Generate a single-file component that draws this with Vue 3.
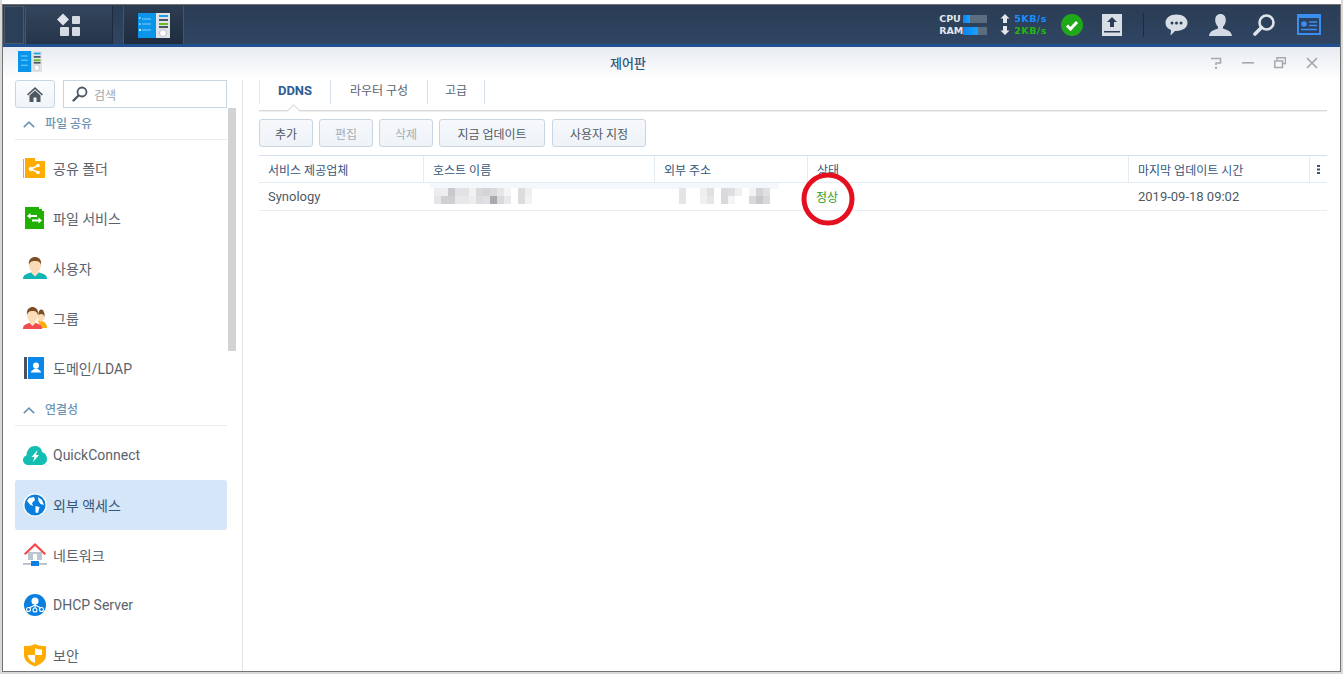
<template>
  <div class="page">
    <div class="top-strip"></div>
    <div class="window">
      <div class="taskbar">
        <div class="show-desktop"></div>
        <div class="menu-btn">
          <svg width="24" height="24" viewBox="0 0 24 24">
            <path d="M6 0.5 12 6.5 6 12.5 0 6.5Z" fill="#dfe4ea" />
            <rect x="15" y="3" width="8" height="8" rx="1" fill="#d5dbe3" />
            <rect x="3" y="14" width="9" height="9" rx="1" fill="#d5dbe3" />
            <rect x="15" y="14" width="8" height="9" rx="1" fill="#d5dbe3" />
          </svg>
        </div>
        <div class="app-btn">
          <svg width="32" height="25" viewBox="0 0 32 25">
            <rect width="18" height="25" fill="#0a94ea" />
            <rect x="18" width="14" height="25" fill="#dfe3e6" />
            <path d="M4 6h9M4 11h9M4 17h9" stroke="#7fd0ff" stroke-width="1.2" />
            <path d="M1 5h1.5M1 11h1.5" stroke="#c5ecff" stroke-width="1.4" />
            <rect x="1" y="16" width="2" height="2" fill="#c5ecff" />
            <rect x="21" y="2" width="9" height="2" fill="#1aa0e8" />
            <rect x="21" y="6" width="9" height="2" fill="#4a5560" />
            <rect x="21" y="10" width="9" height="2" fill="#66bb22" />
            <rect x="21" y="13" width="9" height="2" fill="#4a5560" />
            <circle cx="25" cy="20" r="3.5" fill="#fff" stroke="#b8c0c8" />
          </svg>
        </div>
        <div class="tray">
          <div class="meters">
            <div class="meter"><span class="meter-label">CPU</span><span class="bar"><i class="fill" :style="{ width: cpu + '%' }"></i></span></div>
            <div class="meter"><span class="meter-label">RAM</span><span class="bar"><i class="fill" :style="{ width: ram + '%' }"></i></span></div>
          </div>
          <div class="rates">
            <div class="rate up"><svg width="10" height="9" viewBox="0 0 10 9"><path d="M5 0 9.5 4.5H7V9H3V4.5H.5Z" fill="#e3e7ec" /></svg>5KB/s</div>
            <div class="rate down"><svg width="10" height="9" viewBox="0 0 10 9"><path d="M5 9 .5 4.5H3V0H7V4.5H9.5Z" fill="#e3e7ec" /></svg>2KB/s</div>
          </div>
          <svg class="check" width="24" height="24" viewBox="0 0 24 24">
            <circle cx="12" cy="12" r="11" fill="#1fa81a" />
            <path d="M7 12.5 10.5 16 17 9" fill="none" stroke="#fff" stroke-width="3" />
          </svg>
          <svg class="upload" width="20" height="22" viewBox="0 0 20 22">
            <rect width="20" height="22" fill="#d8dee5" />
            <path d="M10 3 15 8H12V13H8V8H5Z" fill="#2c3e56" />
            <rect x="2" y="17" width="16" height="1.5" fill="#2c3e56" />
          </svg>
          <span class="tray-sep"></span>
          <svg class="chat" width="23" height="22" viewBox="0 0 23 22">
            <path d="M11.5 0.5C17.8 0.5 22.5 4 22.5 8.8S17.8 17 11.5 17H10L5.5 21.5 6 16C2.500 14.800 .5 12.200 .5 8.800 .5 4 5.200 .5 11.500 .5Z" fill="#d8dee6" />
            <circle cx="7" cy="9" r="1.500" fill="#2c3e56" /><circle cx="11.500" cy="9" r="1.500" fill="#2c3e56" /><circle cx="16" cy="9" r="1.500" fill="#2c3e56" />
          </svg>
          <svg class="person" width="23" height="22" viewBox="0 0 23 22">
            <path d="M11.500 0C15 0 16.800 2.600 16.800 6 16.800 9 15.500 11.500 14 12.800V14.500C17 15.800 22.500 16.500 23 22H0C.5 16.500 6 15.800 9 14.500V12.800C7.500 11.500 6.200 9 6.200 6 6.200 2.600 8 0 11.500 0Z" fill="#d3dae3" />
          </svg>
          <svg class="find" width="23" height="22" viewBox="0 0 23 22">
            <circle cx="13.500" cy="8.500" r="7" fill="none" stroke="#dfe4ea" stroke-width="2.600" />
            <path d="M8.500 13.500 2 20" stroke="#dfe4ea" stroke-width="3.600" stroke-linecap="round" />
          </svg>
          <svg class="widget" width="24" height="21" viewBox="0 0 24 21">
            <rect width="24" height="21" fill="#3a8eef" />
            <rect x="2" y="4" width="20" height="15" fill="#2c4060" />
            <circle cx="7" cy="10" r="2.800" fill="#3a8eef" />
            <path d="M12 8h8M12 11.500h8M4 15.500h16" stroke="#3a8eef" stroke-width="1.600" />
          </svg>
        </div>
      </div>

      <div class="win-head">
        <svg class="win-icon" width="24" height="21" viewBox="0 0 32 25" preserveAspectRatio="none">
          <rect width="18" height="25" fill="#0a94ea" />
          <rect x="18" width="14" height="25" fill="#dfe3e6" />
          <path d="M4 6h9M4 11h9M4 17h9" stroke="#7fd0ff" stroke-width="1.200" />
          <rect x="21" y="2" width="9" height="2" fill="#1aa0e8" />
          <rect x="21" y="6" width="9" height="2" fill="#4a5560" />
          <rect x="21" y="10" width="9" height="2" fill="#66bb22" />
          <rect x="21" y="13" width="9" height="2" fill="#4a5560" />
          <circle cx="25" cy="20" r="3.500" fill="#fff" stroke="#b8c0c8" />
        </svg>
        <div class="win-title">제어판</div>
        <div class="win-controls">
          <svg width="12" height="12" viewBox="0 0 12 12"><path d="M1 1.500H10.500V6H6V8" fill="none" stroke="#a3a9af" stroke-width="1.600" /><rect x="5" y="9.800" width="2" height="2" fill="#a3a9af" /></svg>
          <svg width="12" height="12" viewBox="0 0 12 12"><rect y="5" width="12" height="1.600" fill="#a3a9af" /></svg>
          <svg width="12" height="12" viewBox="0 0 12 12"><path d="M3 3V.8H11.500V6.500H9M.8 4H8.500V10.500H.8Z" fill="none" stroke="#a3a9af" stroke-width="1.500" /></svg>
          <svg width="12" height="12" viewBox="0 0 12 12"><path d="M1 1 11 11M11 1 1 11" stroke="#a3a9af" stroke-width="1.700" /></svg>
        </div>
      </div>

      <div class="content">
        <aside class="sidebar">
          <div class="search-row">
            <button class="home-btn">
              <svg width="16" height="15" viewBox="0 0 16 15"><path d="M8 0 16 7.500 14.800 8.500 8 2.300 1.200 8.500 0 7.500Z" fill="#4d5863" /><path d="M2.500 8.500 8 3.500 13.500 8.500V15H9.500V10.500H6.500V15H2.500Z" fill="#4d5863" /></svg>
            </button>
            <div class="search">
              <svg width="16" height="16" viewBox="0 0 16 16"><circle cx="10" cy="6" r="4.500" fill="none" stroke="#4d5863" stroke-width="1.800" /><path d="M6.500 9.500 1.500 14.500" stroke="#4d5863" stroke-width="2.400" stroke-linecap="round" /></svg>
              <span>검색</span>
            </div>
          </div>

          <template v-for="group in groups" :key="group.title">
            <div class="group-head">
              <svg width="12" height="7" viewBox="0 0 12 7"><path d="M.8 6.200 6 1.200 11.200 6.200" fill="none" stroke="#6d93b4" stroke-width="1.600" /></svg>
              <span>{{ group.title }}</span>
            </div>
            <div class="group-items">
              <div v-for="item in group.items" :key="item.label" class="nav-item" :class="{ active: item.active }">
                <svg class="nav-icon" width="24" height="24" viewBox="0 0 24 24">
                  <template v-if="item.icon === 'folder'">
                    <rect x="0" y="3" width="1" height="19" fill="#ffab00" />
                    <path d="M2 2H12V5H22V22H2Z" fill="#ffab00" />
                    <path d="M8 13 15 9.500M8 13 15 16.500" stroke="#fff" stroke-width="1.500" />
                    <circle cx="8" cy="13" r="2.300" fill="#fff" /><circle cx="15" cy="9.500" r="1.800" fill="#fff" /><circle cx="15" cy="16.500" r="1.800" fill="#fff" />
                  </template>
                  <template v-else-if="item.icon === 'file'">
                    <path d="M2 1H16V3H19V5H21V23H2Z" fill="#20b000" />
                    <path d="M4 10 7.500 7V9H14V11H7.500V13ZM19 14.500 15.500 11.500V13.500H9V15.500H15.500V17.500Z" fill="#fff" />
                  </template>
                  <template v-else-if="item.icon === 'user'">
                    <path d="M0 23C0 19 3 18 8 16.500H16C21 18 24 19 24 23Z" fill="#0fb5b5" />
                    <path d="M8.500 13H15.500V17L12 20.500 8.500 17Z" fill="#fde0bc" />
                    <ellipse cx="12" cy="9" rx="6" ry="8" fill="#fbdcb8" />
                    <path d="M6 9C5 3 9 1 12 1S19 3 18 9C17 6 16 5 12 5S7 6 6 9Z" fill="#7c4e28" />
                  </template>
                  <template v-else-if="item.icon === 'group'">
                    <path d="M15 15 17 13 19 15C22 16 24 18 24 22H18Z" fill="#ffac10" />
                    <ellipse cx="18" cy="10" rx="3.500" ry="5.500" fill="#fbdcb8" />
                    <path d="M15.500 9C15 5 17 3.500 18.500 3.500S22 6 21.500 11C20.500 8 19 7 15.500 9Z" fill="#7c4e28" />
                    <path d="M0 23C0 19 2.500 18.500 6 17H13C16.500 18.500 19 19 19 23Z" fill="#f24b50" />
                    <path d="M6.500 13H12.500V17L9.500 20 6.500 17Z" fill="#fde0bc" />
                    <ellipse cx="9.500" cy="9" rx="5.500" ry="7.500" fill="#fbdcb8" />
                    <path d="M4 9C3 3 7 1 9.500 1S16 3 15 9C14 6 13 5 9.500 5S5 6 4 9Z" fill="#7c4e28" />
                  </template>
                  <template v-else-if="item.icon === 'domain'">
                    <rect x="1" y="1" width="3" height="22" fill="#47525e" />
                    <rect x="5" y="1" width="16" height="22" fill="#0a88ea" />
                    <circle cx="13" cy="9.500" r="3" fill="#fff" />
                    <path d="M8 16.500C8 14 11 14 11.500 12.500H14.500C15 14 18 14 18 16.500Z" fill="#fff" />
                  </template>
                  <template v-else-if="item.icon === 'cloud'">
                    <path d="M6 22C2.500 22 0 20 0 17 0 14.500 1.500 13 3.500 12.500 3.500 8 6.500 3 12 3 16 3 18.500 5.500 19 9 22 10 24 12.500 24 16 24 19.500 21.500 22 18 22Z" fill="#14bdb2" />
                    <path d="M14.500 7 8.500 14H11.500L10 19 16 12H13Z" fill="#fff" />
                  </template>
                  <template v-else-if="item.icon === 'globe'">
                    <circle cx="12" cy="12" r="11.800" fill="#fff" />
                    <circle cx="12" cy="12" r="10.500" fill="#0a7fe0" />
                    <path d="M6 5 11 4 12 7 9 10 10 13 7.500 12 4 8ZM12.500 13 16.500 14 15 20 12.500 19.500ZM15 4 19 7 21 12 17.500 11 15.500 8Z" fill="#fff" />
                  </template>
                  <template v-else-if="item.icon === 'network'">
                    <path d="M5 9H19V17H5Z" fill="#bcc6d0" />
                    <path d="M12 0 23 10.500 21.500 12 12 3 2.500 12 1 10.500Z" fill="#f5474c" />
                    <rect x="10" y="11" width="4" height="6" fill="#fff" />
                    <rect y="20" width="24" height="1.800" fill="#b4bdc7" />
                    <rect x="8" y="18" width="8" height="5" fill="#0a7fe0" />
                  </template>
                  <template v-else-if="item.icon === 'dhcp'">
                    <circle cx="12" cy="12" r="11" fill="#0a7fe0" />
                    <circle cx="12" cy="8" r="3.500" fill="#fff" />
                    <path d="M12 10V15M12 12 6 15M12 12 18 15" stroke="#fff" stroke-width="1.100" />
                    <circle cx="5.500" cy="16.500" r="2" fill="none" stroke="#fff" stroke-width="1.100" />
                    <circle cx="12" cy="17" r="2" fill="none" stroke="#fff" stroke-width="1.100" />
                    <circle cx="18.500" cy="16.500" r="2" fill="none" stroke="#fff" stroke-width="1.100" />
                  </template>
                  <template v-else-if="item.icon === 'shield'">
                    <path d="M12 1C16 3 19 3 23 3V12C23 18 18 21 12 23.500 6 21 1 18 1 12V3C5 3 8 3 12 1Z" fill="#ffab00" />
                    <path d="M12 5C14.500 6 16.500 6.500 19 6.500V12H12ZM12 12V20C8.500 18.500 5 16.500 5 12Z" fill="#fff" />
                  </template>
                </svg>
                <span>{{ item.label }}</span>
              </div>
            </div>
          </template>
          <div class="scroll-thumb"></div>
        </aside>

        <main class="main">
          <div class="tabs">
            <div v-for="tab in tabs" :key="tab.label" class="tab" :class="{ current: tab.current }" :style="{ width: tab.width + 'px' }">{{ tab.label }}</div>
          </div>
          <div class="toolbar">
            <button v-for="b in buttons" :key="b.label" class="tool-btn" :class="{ off: b.off }" :style="{ width: b.width + 'px' }">{{ b.label }}</button>
          </div>
          <div class="grid head">
            <div v-for="c in columns" :key="c" class="cell">{{ c }}</div>
            <div class="cell more">
              <svg width="3" height="9" viewBox="0 0 3 9"><path d="M0 0h3v2H0zM0 3.500h3v2H0zM0 7h3v2H0z" fill="#34577d" /></svg>
            </div>
          </div>
          <div class="grid row">
            <div class="cell">Synology</div>
            <div class="cell blurred host">
              <div class="mosaic">
                <div v-for="(line, i) in hostBlur" :key="i" class="mosaic-line">
                  <i v-for="(shade, j) in line" :key="j" :style="{ background: shade }"></i>
                </div>
              </div>
            </div>
            <div class="cell blurred addr">
              <div class="mosaic">
                <div v-for="(line, i) in addrBlur" :key="i" class="mosaic-line">
                  <i v-for="(shade, j) in line" :key="j" :style="{ background: shade }"></i>
                </div>
              </div>
            </div>
            <div class="cell status">
              정상
              <svg class="ring" width="54" height="54" viewBox="0 0 54 54"><ellipse cx="27" cy="27" rx="24" ry="24" fill="none" stroke="#e5101f" stroke-width="5" /></svg>
            </div>
            <div class="cell">2019-09-18 09:02</div>
            <div class="cell"></div>
          </div>
        </main>
      </div>
    </div>
  </div>
</template>

<script setup>
const cpu = 30
const ram = 62

const groups = [
  {
    title: '파일 공유',
    items: [
      { label: '공유 폴더', icon: 'folder' },
      { label: '파일 서비스', icon: 'file' },
      { label: '사용자', icon: 'user' },
      { label: '그룹', icon: 'group' },
      { label: '도메인/LDAP', icon: 'domain' },
    ],
  },
  {
    title: '연결성',
    items: [
      { label: 'QuickConnect', icon: 'cloud' },
      { label: '외부 액세스', icon: 'globe', active: true },
      { label: '네트워크', icon: 'network' },
      { label: 'DHCP Server', icon: 'dhcp' },
      { label: '보안', icon: 'shield' },
    ],
  },
]

const tabs = [
  { label: 'DDNS', width: 72, current: true },
  { label: '라우터 구성', width: 97 },
  { label: '고급', width: 57 },
]

const buttons = [
  { label: '추가', width: 54 },
  { label: '편집', width: 54, off: true },
  { label: '삭제', width: 54, off: true },
  { label: '지금 업데이트', width: 106 },
  { label: '사용자 지정', width: 94 },
]

const columns = ['서비스 제공업체', '호스트 이름', '외부 주소', '상태', '마지막 업데이트 시간']

const w = '#ffffff'
const hostBlur = [
  ['#ececee', '#eeeef0', '#c9c9cd', '#e2e2e5', '#e2e2e5', '#f2f2f3', '#d9d9dc', '#d4d4d8', '#dadadd', '#e6e6e8', '#f4f4f5', w, '#dcdcdf', '#eeeeef'],
  ['#e6e6e8', '#cfcfd3', '#cfcfd3', '#e8e8ea', '#e8e8ea', '#ededef', '#dddde0', '#e0e0e3', '#a9a9b2', '#dadadd', '#e9e9eb', w, '#dcdcdf', '#f2f2f3'],
]
const addrBlur = [
  ['#e4e4e6', w, w, '#eeeef0', '#e0e0e3', w, '#dadadd', '#dedee0', '#f0f0f1', w, '#f2f2f3', '#d4d4d8', '#e0e0e3'],
  ['#e4e4e6', w, w, '#f0f0f1', '#e6e6e8', w, '#d9d9dc', '#f4f4f5', w, w, '#d8d8db', '#c8c8cc', '#d8d8db'],
]
</script>

<style>
html,
body {
  margin: 0;
  overflow: hidden;
}
</style>

<style scoped>
.page {
  width: 1343px;
  height: 674px;
  background: #d9d9d9;
  padding: 0 2px 2px;
  box-sizing: border-box;
  font-family: Roboto, "Noto Sans CJK KR", sans-serif;
  color: #505a64;
}
.top-strip {
  height: 4px;
  background: #fff;
}
.window {
  height: 668px;
  width: 1339px;
  box-sizing: border-box;
  border: 1px solid #747474;
  background: #fff;
  display: flex;
  flex-direction: column;
  overflow: hidden;
}

/* taskbar */
.taskbar {
  height: 39px;
  flex: none;
  display: flex;
  background: linear-gradient(#2b3d55, #2f4562);
  border-bottom: 3px solid #1f4f8e;
}
.show-desktop {
  width: 20px;
  margin: 1px 0 0 1px;
  border: 1px solid #4a5a6c;
  box-sizing: border-box;
  background: #2c3f58;
}
.menu-btn {
  width: 88px;
  margin-left: 1px;
  margin-top: 1px;
  background: linear-gradient(#33455d, #26354a);
  border-left: 1px solid #46566a;
  border-right: 1px solid #1e2b3c;
  box-sizing: border-box;
  display: flex;
  justify-content: center;
  align-items: center;
}
.app-btn {
  width: 61px;
  margin-left: 10px;
  margin-top: 1px;
  background: linear-gradient(#2c3c52, #1f2c3f);
  border-left: 1px solid #46566a;
  border-right: 1px solid #46566a;
  box-sizing: border-box;
  display: flex;
  justify-content: center;
  align-items: center;
}
.tray {
  margin-left: auto;
  display: flex;
  align-items: center;
  padding-right: 19px;
}
.meters {
  display: flex;
  flex-direction: column;
  gap: 3px;
}
.meter {
  display: flex;
  align-items: center;
  height: 9px;
}
.meter-label {
  width: 24px;
  font: bold 9.5px/9px "DejaVu Sans", sans-serif;
  color: #e3e7ec;
  letter-spacing: 0;
}
.bar {
  width: 24px;
  height: 8px;
  background: #5d6d80;
  display: block;
}
.fill {
  display: block;
  height: 100%;
  background: linear-gradient(90deg, #0a86f0, #1aa0ff);
}
.rates {
  margin-left: 13px;
  display: flex;
  flex-direction: column;
  gap: 3px;
}
.rate {
  display: flex;
  align-items: center;
  gap: 4px;
  height: 9px;
  font: bold 9.5px/9px "DejaVu Sans", sans-serif;
  letter-spacing: 0.5px;
}
.rate.up {
  color: #1a8cff;
}
.rate.down {
  color: #25b312;
}
.check {
  margin-left: 13px;
}
.upload {
  margin-left: 18px;
}
.tray-sep {
  width: 1px;
  height: 24px;
  background: #1f2c3d;
  margin: 0 21px;
}
.person,
.find,
.widget {
  margin-left: 21px;
}

/* window header */
.win-head {
  height: 33px;
  flex: none;
  display: flex;
  align-items: center;
  padding: 0 22px 0 15px;
  background: linear-gradient(#e7ebf1, #fff);
}
.win-icon {
  margin-top: -4px;
}
.win-title {
  flex: 1;
  text-align: center;
  font-size: 13px;
  font-weight: 500;
  color: #34577d;
  margin-top: -2px;
  padding-left: 4px;
}
.win-controls {
  display: flex;
  gap: 20px;
  margin-top: -2px;
}

/* sidebar */
.content {
  flex: 1;
  display: flex;
  min-height: 0;
}
.sidebar {
  width: 240px;
  flex: none;
  box-sizing: border-box;
  padding: 0 15px 0 12px;
  border-right: 1px solid #e4e4e4;
  position: relative;
  overflow: hidden;
}
.search-row {
  display: flex;
  gap: 8px;
  height: 28px;
}
.home-btn {
  width: 40px;
  height: 28px;
  padding: 0;
  border: 1px solid #c8d5e2;
  border-radius: 3px;
  background: linear-gradient(#fafbfd, #f0f4f8);
  display: flex;
  justify-content: center;
  align-items: center;
}
.search {
  width: 164px;
  box-sizing: border-box;
  border: 1px solid #c8d5e2;
  display: flex;
  align-items: center;
  gap: 6px;
  padding-left: 8px;
  font-size: 12px;
  color: #a0a6ac;
}
.group-head {
  display: flex;
  align-items: flex-end;
  height: 32px;
  box-sizing: border-box;
  padding: 0 0 5px 8px;
  border-bottom: 1px solid #e8ecf0;
  margin-bottom: 3px;
  font-size: 12px;
  line-height: 20px;
  font-weight: 500;
  color: #6d93b4;
}
.group-head svg {
  margin-bottom: 6px;
  margin-right: 10px;
}
.group-items + .group-head {
  height: 33px;
  margin-bottom: 4px;
}
.nav-item {
  height: 50px;
  display: flex;
  align-items: center;
  gap: 6px;
  padding-left: 8px;
  border-radius: 3px;
  font-size: 14px;
  color: #5a636d;
}
.nav-item.active {
  background: #d5e6f8;
  color: #34577d;
}
.nav-icon {
  flex: none;
}
.scroll-thumb {
  position: absolute;
  left: 225px;
  top: 28px;
  width: 8px;
  height: 243px;
  background: #d2d3d5;
}

/* main */
.main {
  flex: 1;
  min-width: 0;
  padding: 0 13px 0 16px;
}
.tabs {
  display: flex;
  height: 30px;
  border-bottom: 1px solid #d5d9dd;
  box-shadow: 0 1px 0 #eef0f2;
}
.tab {
  height: 24px;
  box-sizing: border-box;
  border-right: 1px solid #d5e0ec;
  text-align: center;
  font-size: 12px;
  line-height: 22px;
  color: #5a636d;
  position: relative;
}
.tab:first-child {
  border-left: 1px solid #e4e9ef;
}
.tab.current {
  font-size: 13px;
  font-weight: 700;
  color: #2d5c96;
}
.tab.current::after {
  content: "";
  position: absolute;
  left: 29px;
  top: 26px;
  width: 8px;
  height: 8px;
  background: #fff;
  border-left: 1px solid #d5d9dd;
  border-top: 1px solid #d5d9dd;
  transform: rotate(45deg);
}
.toolbar {
  display: flex;
  gap: 6px;
  margin-top: 8px;
}
.tool-btn {
  height: 28px;
  padding: 0;
  box-sizing: border-box;
  border: 1px solid #c8d5e2;
  border-radius: 3px;
  background: linear-gradient(#f6f8fb, #eef3f8);
  font-family: inherit;
  font-size: 12px;
  color: #505a64;
}
.tool-btn:nth-child(5) {
  margin-left: 1px;
}
.tool-btn.off {
  color: #a9aeb4;
}
.grid {
  display: grid;
  grid-template-columns: 165px 231px 153px 321px 181px 17px;
}
.head {
  margin-top: 8px;
  height: 28px;
  box-sizing: border-box;
  border-top: 1px solid #d5e0ec;
  border-bottom: 1px solid #e3ebf3;
  color: #34577d;
  font-size: 12px;
}
.head .cell {
  border-right: 1px solid #e3ebf3;
}
.head .cell:last-child {
  border-right: 0;
}
.cell {
  box-sizing: border-box;
  padding-left: 9px;
  display: flex;
  align-items: center;
  min-width: 0;
}
.head .more {
  padding-left: 7px;
}
.row {
  height: 28px;
  box-sizing: border-box;
  border-bottom: 1px solid #e8edf2;
  font-size: 13px;
}
.status {
  position: relative;
  font-size: 12px;
  color: #2ba01e;
  padding-left: 8px;
}
.ring {
  position: absolute;
  left: -7px;
  top: -11px;
}
.blurred {
  padding-left: 0;
  align-items: flex-start;
}
.host {
  background: linear-gradient(#f4f7fb 0 6px, transparent 6px);
  margin-left: 6px;
  padding-left: 4px;
  margin-right: -124px;
  background-size: 350px 100%;
  background-repeat: no-repeat;
}
.addr {
  padding-left: 24px;
}
.mosaic {
  padding-top: 5px;
}
.mosaic-line {
  display: flex;
  height: 8px;
}
.mosaic-line i {
  display: block;
  width: 7px;
  height: 8px;
}
</style>
